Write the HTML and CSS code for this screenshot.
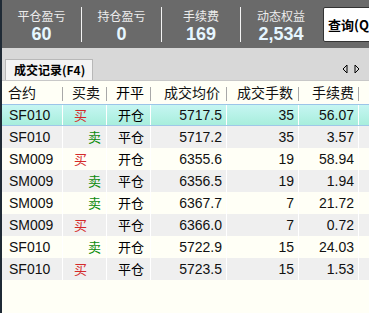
FILE: index.html
```html
<!DOCTYPE html>
<html><head><meta charset="utf-8"><link rel="stylesheet" href="styles.css"></head>
<body>
<div class="app">
  <div class="topbar">
    <div class="stat"><div class="lbl">平仓盈亏</div><div class="val">60</div></div>
    <div class="stat"><div class="lbl">持仓盈亏</div><div class="val">0</div></div>
    <div class="stat"><div class="lbl">手续费</div><div class="val">169</div></div>
    <div class="stat last"><div class="lbl">动态权益</div><div class="val">2,534</div></div>
    <div class="btn">查询(Q)</div>
  </div>
  <div class="strip"></div>
  <div class="tabbar">
    <div class="tab">成交记录(F4)</div>
    <div class="arrows">
      <svg width="8" height="10" viewBox="0 0 8 10"><path d="M6 1 L2 5 L6 9 Z" fill="none" stroke="#000" stroke-width="1"/></svg>
      <svg width="8" height="10" viewBox="0 0 8 10"><path d="M2 1 L6 5 L2 9 Z" fill="none" stroke="#000" stroke-width="1"/></svg>
    </div>
  </div>
  <div class="grid">
    <div class="row head">
      <div class="c c1">合约</div><div class="c c2">买卖</div><div class="c c3">开平</div><div class="c c4">成交均价</div><div class="c c5">成交手数</div><div class="c c6">手续费</div><div class="c c7"></div>
    </div>
    <div class="row sel"><div class="c c1">SF010</div><div class="c c2 buy">买</div><div class="c c3">开仓</div><div class="c c4 n">5717.5</div><div class="c c5 n">35</div><div class="c c6 n">56.07</div><div class="c c7"></div></div>
    <div class="row g"><div class="c c1">SF010</div><div class="c c2 sell">卖</div><div class="c c3">平仓</div><div class="c c4 n">5717.2</div><div class="c c5 n">35</div><div class="c c6 n">3.57</div><div class="c c7"></div></div>
    <div class="row w"><div class="c c1">SM009</div><div class="c c2 buy">买</div><div class="c c3">开仓</div><div class="c c4 n">6355.6</div><div class="c c5 n">19</div><div class="c c6 n">58.94</div><div class="c c7"></div></div>
    <div class="row g"><div class="c c1">SM009</div><div class="c c2 sell">卖</div><div class="c c3">平仓</div><div class="c c4 n">6356.5</div><div class="c c5 n">19</div><div class="c c6 n">1.94</div><div class="c c7"></div></div>
    <div class="row w"><div class="c c1">SM009</div><div class="c c2 sell">卖</div><div class="c c3">开仓</div><div class="c c4 n">6367.7</div><div class="c c5 n">7</div><div class="c c6 n">21.72</div><div class="c c7"></div></div>
    <div class="row g"><div class="c c1">SM009</div><div class="c c2 buy">买</div><div class="c c3">平仓</div><div class="c c4 n">6366.0</div><div class="c c5 n">7</div><div class="c c6 n">0.72</div><div class="c c7"></div></div>
    <div class="row w"><div class="c c1">SF010</div><div class="c c2 sell">卖</div><div class="c c3">开仓</div><div class="c c4 n">5722.9</div><div class="c c5 n">15</div><div class="c c6 n">24.03</div><div class="c c7"></div></div>
    <div class="row g"><div class="c c1">SF010</div><div class="c c2 buy">买</div><div class="c c3">平仓</div><div class="c c4 n">5723.5</div><div class="c c5 n">15</div><div class="c c6 n">1.53</div><div class="c c7"></div></div>
  </div>
</div>
</body></html>
```

FILE: styles.css
```css
html, body { margin: 0; padding: 0; }
body { width: 369px; height: 313px; overflow: hidden; background: #fffff6; font-family: "Liberation Sans", "Noto Sans CJK SC", sans-serif; }
.app { height: 313px; border-left: 2px solid #1f2a35; box-sizing: border-box; display: flex; flex-direction: column; background: #fffff6; }
.topbar { height: 48px; background: #6a6a6a; display: flex; align-items: center; flex: none; overflow: hidden; }
.stat { flex: none; width: 80px; height: 35px; border-right: 1px solid #f4f4f4; display: flex; flex-direction: column; align-items: center; box-sizing: border-box; }
.stat:nth-child(3) { width: 79px; }
.lbl { font-family: "Noto Sans CJK SC", sans-serif; font-size: 12px; line-height: 14px; color: #ececec; margin-top: 2px; }
.val { font-family: "Liberation Sans", sans-serif; font-weight: bold; font-size: 18px; line-height: 18px; color: #e6f6ff; margin-top: 2px; }
.stat.last { width: 80px; border-right: none; }
.btn { flex: none; width: 60px; height: 35px; margin-left: 2px; background: #fff; border: 1px solid #333; border-radius: 2px; box-sizing: border-box; font-family: "Noto Sans CJK SC", sans-serif; font-weight: bold; font-size: 13px; line-height: 33px; padding-left: 4px; white-space: nowrap; color: #000; }
.strip { height: 10px; background: #d8d8d8; flex: none; }
.tabbar { height: 22px; background: #d8d8d8; display: flex; align-items: flex-end; justify-content: space-between; flex: none; border-bottom: 1px solid #c8c8c8; }
.tab { margin-left: 3px; height: 21px; padding: 0 7px 0 8px; background: #f4f4f4; border: 1px solid #b8b8b8; border-bottom: none; box-sizing: border-box; font-family: "Noto Sans CJK SC", sans-serif; font-weight: bold; font-size: 12px; line-height: 20px; color: #000; }
.arrows { display: flex; gap: 4px; align-self: center; margin-right: 8px; }
.grid { flex: 1; display: flex; flex-direction: column; background: #fffff6; }
.row { display: flex; height: 22px; flex: none; font-size: 14px; line-height: 22px; color: #111; }
.row.head { height: 23px; background: #fffff6; font-family: "Noto Sans CJK SC", sans-serif; font-size: 14px; line-height: 23px; }
.c { box-sizing: border-box; white-space: nowrap; overflow: hidden; }
.c1 { width: 61px; padding-left: 7px; }
.c2 { width: 44px; }
.c3 { width: 44px; padding-left: 11px; font-family: "Noto Sans CJK SC", sans-serif; font-size: 13px; color: #000; }
.c4 { width: 76px; }
.c5 { width: 72px; }
.c6 { width: 60px; }
.c7 { flex: 1; }
.head .c { padding-right: 0; position: relative; }
.head .c1 { padding-left: 6px; }
.head .c2 { padding-left: 9px; }
.head .c3 { padding-left: 9px; font-size: 14px; }
.head .c4 { padding-left: 13px; }
.head .c5 { padding-left: 10px; }
.head .c6 { padding-left: 13px; }
.head .c::after { content: ""; position: absolute; right: 0; top: 6px; height: 14px; border-right: 1px solid #a8a8a8; }
.head .c7::after { display: none; }
.row:not(.head) .c { border-right: 1px solid #fff; }
.row:not(.head) .c7 { border-right: none; }
.n { text-align: right; padding-right: 4px; }
.buy { color: #d42a2a; font-family: "Noto Sans CJK SC", sans-serif; font-size: 13px; padding-left: 11px; }
.sell { color: #0a8a0a; font-family: "Noto Sans CJK SC", sans-serif; font-size: 13px; text-align: right; padding-right: 5px; }
.row.g { background: #efefef; }
.row.w { background: #fffff6; }
.row.sel { background: linear-gradient(#c6f6f2, #a8eedc); border-top: 1px solid #9cc4e8; border-bottom: 1px solid #a0c8e8; height: 22px; line-height: 20px; box-sizing: border-box; }
```
